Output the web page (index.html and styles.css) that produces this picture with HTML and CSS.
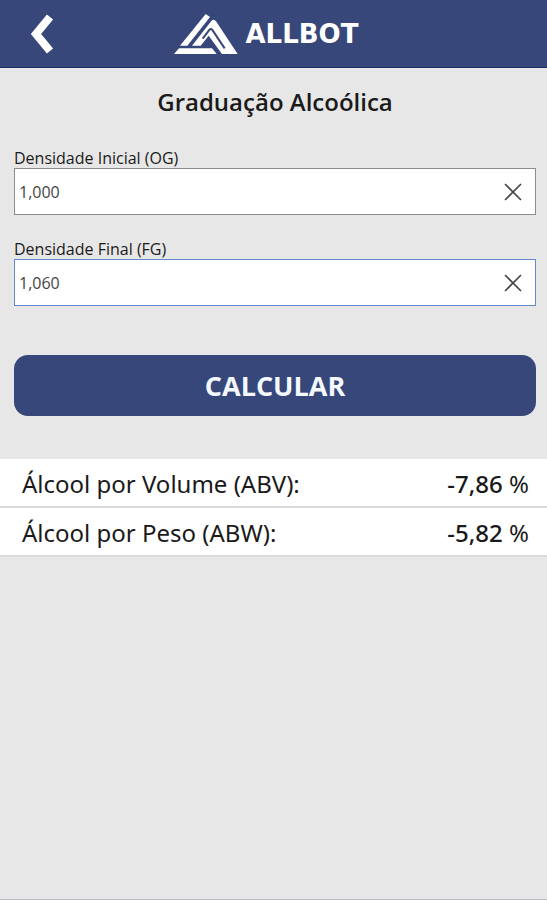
FILE: index.html
```html
<!DOCTYPE html>
<html lang="pt-BR">
<head>
<meta charset="utf-8">
<meta name="viewport" content="width=device-width, initial-scale=1">
<title>Graduação Alcoólica</title>
<link rel="stylesheet" href="styles.css">
</head>
<body>
<header class="topbar">
  <button class="back" type="button" aria-label="Voltar">
    <svg width="24" height="40" viewBox="0 0 24 40" fill="none" stroke="#fff" stroke-width="8"><path d="M20 3 6 20 20 37"/></svg>
  </button>
  <div class="brand">
    <svg class="mark" width="64" height="42" viewBox="0 0 192 126">
      <path fill="#fff" d="M95 3 108 12 40 98H18Z"/>
      <path fill="#fff" d="M0 123 15 106H114L128 123Z"/>
      <path fill="#fff" d="M54 98 112 24Q119 16 126 25L191 123H144L104 68 80 98Z"/>
      <path fill="none" stroke="#38477a" stroke-width="6" d="M86 77 106 51Q111 45 116 52L152 106"/>
    </svg>
    <span class="wordmark">ALLBOT</span>
  </div>
</header>
<main>
  <h1>Graduação Alcoólica</h1>
  <form class="form">
    <div class="field">
      <label for="og">Densidade Inicial (OG)</label>
      <div class="box">
        <input id="og" type="text" inputmode="decimal" value="1,000">
        <button class="clear" type="button" aria-label="Limpar densidade inicial"><svg width="18" height="18" viewBox="0 0 18 18" fill="none" stroke="#444" stroke-width="1.6"><path d="M1 1 17 17M17 1 1 17"/></svg></button>
      </div>
    </div>
    <div class="field">
      <label for="fg">Densidade Final (FG)</label>
      <div class="box box-active">
        <input id="fg" type="text" inputmode="decimal" value="1,060">
        <button class="clear" type="button" aria-label="Limpar densidade final"><svg width="18" height="18" viewBox="0 0 18 18" fill="none" stroke="#444" stroke-width="1.6"><path d="M1 1 17 17M17 1 1 17"/></svg></button>
      </div>
    </div>
    <button class="submit" type="button">CALCULAR</button>
  </form>
  <dl class="results">
    <div class="row"><dt>Álcool por Volume (ABV):</dt><dd><b>-7,86</b> %</dd></div>
    <div class="row"><dt>Álcool por Peso (ABW):</dt><dd><b>-5,82</b> %</dd></div>
  </dl>
</main>
</body>
</html>
```
FILE: styles.css
```css
* {
  box-sizing: border-box;
}

body {
  margin: 0;
  min-height: 100vh;
  background: #e7e7e7;
  border-bottom: 1px solid #bdbdc0;
  color: #1a1a1a;
  font-family: "Open Sans", "Noto Sans", sans-serif;
}

button {
  padding: 0;
  border: 0;
  background: none;
  cursor: pointer;
}

svg {
  display: block;
}

.topbar {
  display: grid;
  grid-template-columns: 60px 1fr 60px;
  align-items: center;
  height: 68px;
  background: #38477a;
  border-bottom: 1px solid #173168;
}

.back {
  display: flex;
  justify-content: flex-end;
  padding-right: 6px;
}

.brand {
  display: flex;
  align-items: center;
  justify-content: center;
  gap: 8px;
}

.wordmark {
  min-width: 128px;
  color: #fff;
  font: bold 26px/32px "DejaVu Sans", sans-serif;
}

h1 {
  margin: 0;
  padding: 18px 11px 18px 14px;
  font-size: 24px;
  line-height: 32px;
  font-weight: 600;
  text-align: center;
}

.form {
  display: flex;
  flex-direction: column;
  gap: 24px;
  padding: 12px 11px 0 14px;
}

.field label {
  display: block;
  font-size: 16px;
  line-height: 20px;
}

.box {
  display: flex;
  align-items: center;
  height: 47px;
  background: #fff;
  border: 1px solid #8c8c8c;
}

.box-active {
  border-color: #6688d4;
}

.box input {
  flex: 1;
  min-width: 0;
  height: 100%;
  padding: 0 4px;
  border: 0;
  outline: 0;
  background: none;
  color: #444;
  font: 16px "Open Sans", "Noto Sans", sans-serif;
}

.clear {
  display: grid;
  place-items: center;
  width: 44px;
  height: 100%;
}

.submit {
  height: 61px;
  margin-top: 25px;
  border-radius: 14px;
  background: #38477a;
  color: #f4f8ff;
  font: bold 27px "Open Sans", "Noto Sans", sans-serif;
}

.results {
  margin: 43px 0 0;
  font-family: "Noto Sans", "Open Sans", sans-serif;
}

.row {
  display: flex;
  align-items: center;
  justify-content: space-between;
  height: 49px;
  padding: 2px 18px 0 22px;
  background: #fff;
  border-bottom: 2px solid #dadada;
  font-size: 24px;
}

.row dd {
  margin: 0;
}

.row b {
  font-weight: 500;
}
```
